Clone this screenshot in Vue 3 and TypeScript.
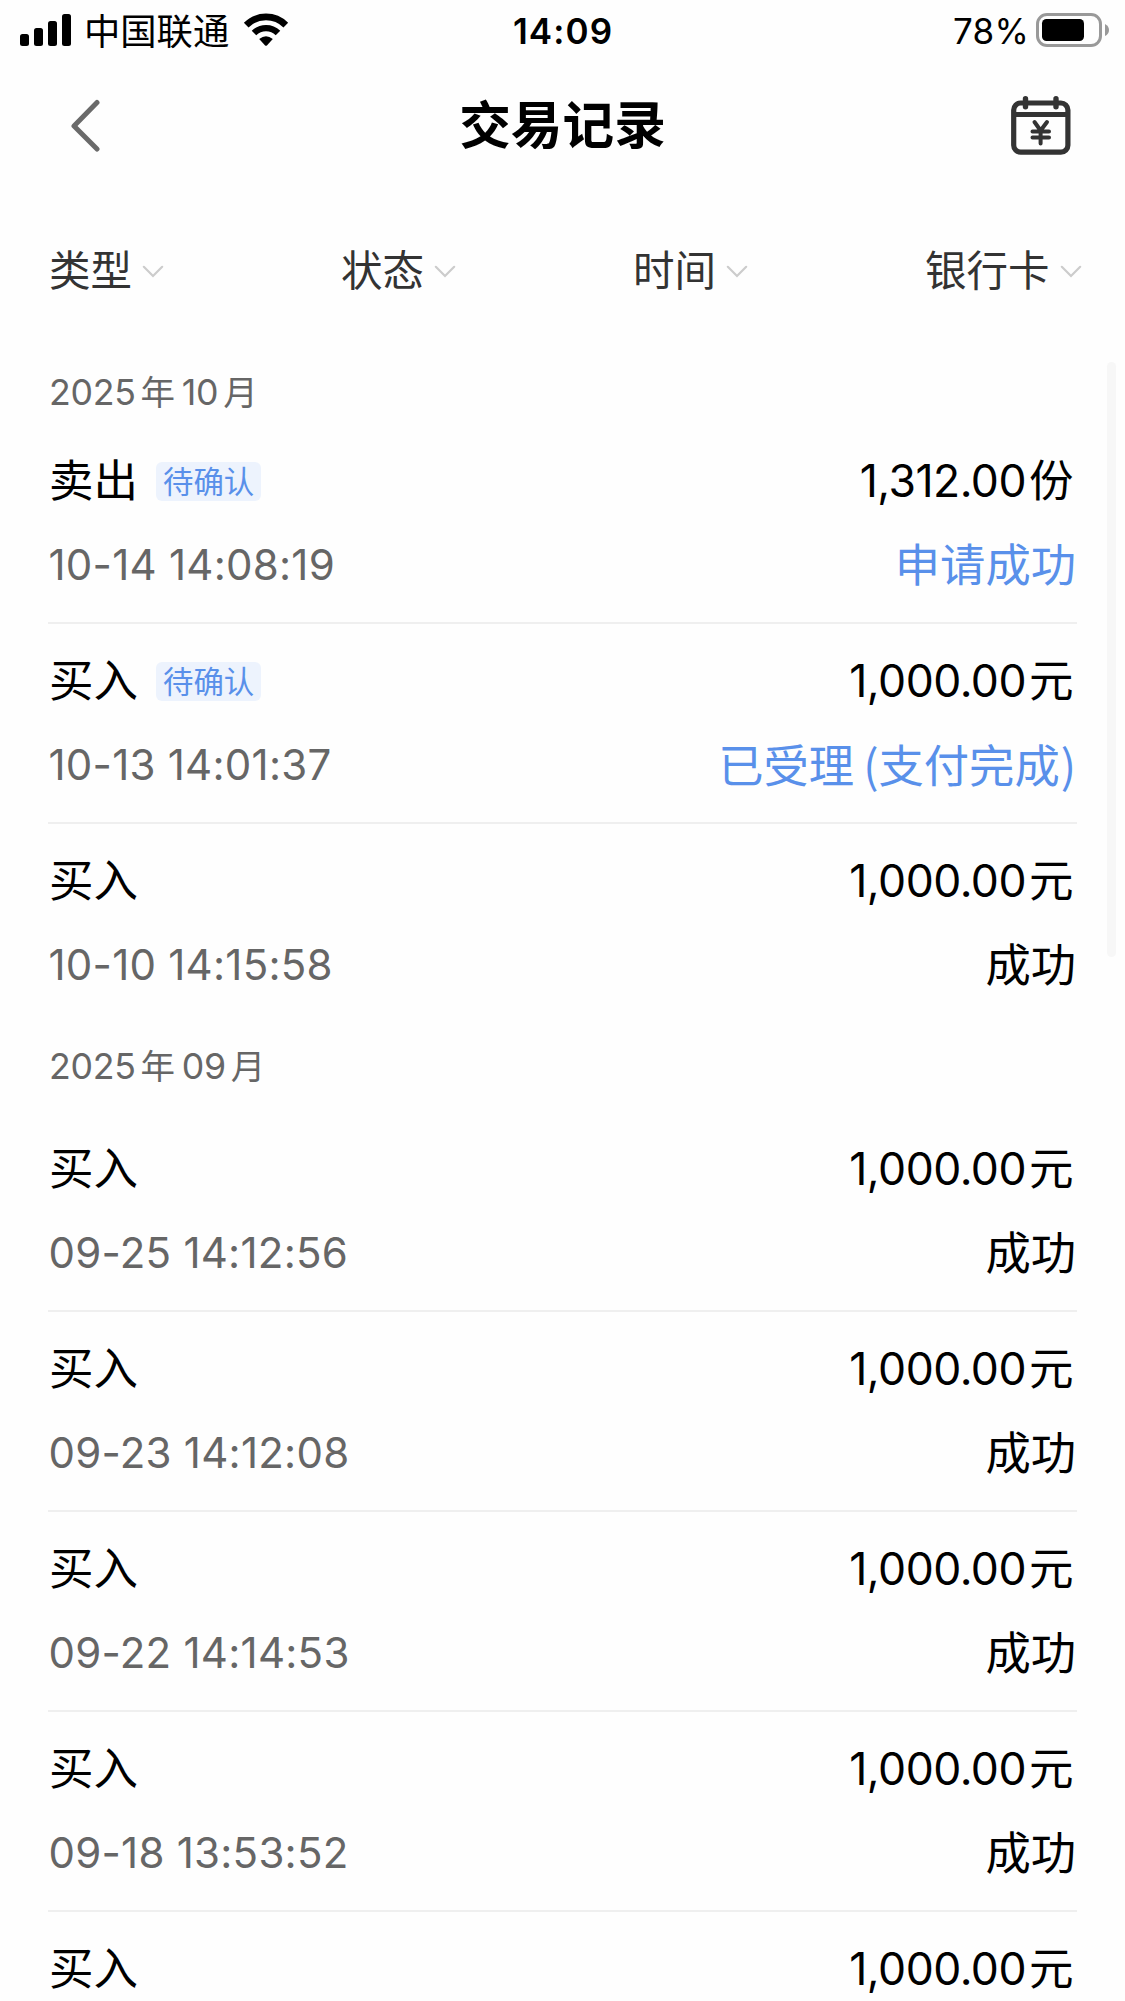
<script setup lang="ts">
interface TradeRecord {
  type: string
  tag?: string
  time: string
  amount: string
  unit: string
  status: string
  note?: string
  pending?: boolean
}

interface MonthGroup {
  year: string
  month: string
  records: TradeRecord[]
}

const filters: string[] = ['类型', '状态', '时间', '银行卡']

const buy = (time: string): TradeRecord => ({
  type: '买入',
  time,
  amount: '1,000.00',
  unit: '元',
  status: '成功',
})

const groups: MonthGroup[] = [
  {
    year: '2025',
    month: '10',
    records: [
      { type: '卖出', tag: '待确认', time: '10-14 14:08:19', amount: '1,312.00', unit: '份', status: '申请成功', pending: true },
      { ...buy('10-13 14:01:37'), tag: '待确认', status: '已受理', note: '支付完成', pending: true },
      buy('10-10 14:15:58'),
    ],
  },
  {
    year: '2025',
    month: '09',
    records: [
      buy('09-25 14:12:56'),
      buy('09-23 14:12:08'),
      buy('09-22 14:14:53'),
      buy('09-18 13:53:52'),
      { ...buy(''), status: '' },
    ],
  },
]
</script>

<template>
  <div class="screen">
    <div class="statusbar">
      <div class="side">
        <svg class="signal" width="52" height="34" viewBox="0 0 52 34">
          <rect x="0" y="21" width="9" height="12" rx="2.5" />
          <rect x="14" y="15" width="9" height="18" rx="2.5" />
          <rect x="28" y="8" width="9" height="25" rx="2.5" />
          <rect x="42" y="1" width="9" height="32" rx="2.5" />
        </svg>
        <span class="carrier">中国联通</span>
        <svg class="wifi" width="46" height="34" viewBox="0 0 46 34">
          <path d="M3.2 12.1 A28 28 0 0 1 42.8 12.1" fill="none" stroke="#000" stroke-width="6.6" />
          <path d="M11 20.1 A17 17 0 0 1 35 20.1" fill="none" stroke="#000" stroke-width="6.4" />
          <path d="M16.2 26 Q23 20.6 29.8 26 L23.9 32.4 Q23 33.2 22.1 32.4 Z" />
        </svg>
      </div>
      <span class="clock">14:09</span>
      <div class="side right">
        <span class="percent">78%</span>
        <svg class="battery" width="74" height="34" viewBox="0 0 74 34">
          <rect x="1.5" y="1.5" width="63" height="31" rx="9.5" fill="none" stroke="#999" stroke-width="3" />
          <rect x="6" y="6" width="42" height="22" rx="4.5" />
          <path d="M69 11 Q73 13 73 17 Q73 21 69 23 Z" fill="#999" />
        </svg>
      </div>
    </div>

    <div class="navbar">
      <svg class="back" width="30" height="54" viewBox="0 0 30 54">
        <path d="M27 3.5 L4 27 L27 50" fill="none" stroke="#6a6a6a" stroke-width="5" stroke-linecap="round" stroke-linejoin="round" />
      </svg>
      <h1 class="title">交易记录</h1>
      <svg class="calendar" width="60" height="60" viewBox="0 0 60 60" fill="none" stroke="#333">
        <rect x="2.7" y="7" width="54.2" height="49.2" rx="7" stroke-width="5.2" />
        <path d="M3 18.5 H57" stroke-width="5" />
        <path d="M14.5 2.7 V10.8 M45 2.7 V10.8" stroke-width="5.4" stroke-linecap="round" />
        <path d="M23.5 26 L29.6 34.5 L36 26 M29.6 35 V47.5 M21.5 35.5 H38 M21.5 41.5 H38" stroke-width="4" stroke-linecap="round" />
      </svg>
    </div>

    <div class="filters">
      <div v-for="name in filters" :key="name" class="filter">
        <span>{{ name }}</span>
        <svg width="22" height="14" viewBox="0 0 22 14">
          <path d="M1.8 1.8 L11 11 L20.2 1.8" fill="none" stroke="#ccc" stroke-width="2.2" stroke-linecap="round" />
        </svg>
      </div>
    </div>

    <div class="list">
      <section v-for="group in groups" :key="group.month" class="group">
        <div class="month"><span>{{ group.year }}</span><span class="han">年</span><span>{{ group.month }}</span><span class="han">月</span></div>
        <div v-for="record in group.records" :key="record.time" class="record">
          <div class="line">
            <div class="kind">
              <span class="type">{{ record.type }}</span>
              <span v-if="record.tag" class="tag">{{ record.tag }}</span>
            </div>
            <span class="amount">{{ record.amount }}<span class="unit">{{ record.unit }}</span></span>
          </div>
          <div class="line detail">
            <span class="time">{{ record.time }}</span>
            <span class="status" :class="{ pending: record.pending }">{{ record.status }}<template v-if="record.note"><span class="paren open">(</span>{{ record.note }}<span class="paren close">)</span></template></span>
          </div>
        </div>
      </section>
      <div class="scrollbar"></div>
    </div>
  </div>
</template>

<style>
body {
  background: #fefefe;
}
</style>

<style scoped>
.screen {
  width: 1125px;
  height: 2001px;
  overflow: hidden;
  background: #fefefe;
  color: #000;
  font-family: Inter, 'Noto Sans CJK SC', sans-serif;
  display: flex;
  flex-direction: column;
}

.statusbar {
  flex: none;
  height: 60px;
  display: flex;
  align-items: center;
  padding: 0 15px 0 20px;
}

.side {
  flex: 1;
  display: flex;
  align-items: center;
  height: 60px;
}

.right {
  justify-content: flex-end;
}

.signal {
  margin-right: 12px;
}

.carrier {
  font-size: 36.3px;
  line-height: 60px;
  width: 146px;
  margin-top: 4px;
  white-space: nowrap;
}

.wifi {
  margin-left: 13px;
}

.clock {
  font-size: 35px;
  font-weight: 600;
  line-height: 60px;
  letter-spacing: 1.1px;
  margin: 2px 4px 0 0;
}

.percent {
  font-size: 35px;
  line-height: 60px;
  letter-spacing: 0.2px;
  margin: 2px 7px 0 0;
}

.navbar {
  flex: none;
  height: 130px;
  display: flex;
  align-items: center;
  justify-content: space-between;
  padding: 2px 54px 0 70px;
}

.title {
  margin: 0 0 4px 14px;
  font-size: 51.7px;
  font-weight: 600;
  line-height: 70px;
}

.back {
  margin-bottom: 2px;
}

.calendar {
  display: block;
  margin-bottom: 2px;
}

.filters {
  flex: none;
  height: 158px;
  padding: 0 0 0 49px;
  display: grid;
  grid-template-columns: repeat(4, 292px);
}

.filter {
  display: flex;
  align-items: center;
  gap: 10px;
  height: 158px;
  color: #333;
  font-size: 41.5px;
  line-height: 60px;
  white-space: nowrap;
}

.filter svg {
  margin-top: 2px;
}

.list {
  position: relative;
  flex: 1;
  padding: 0 48px;
}

.month {
  height: 74px;
  line-height: 85px;
  padding-left: 1px;
  font-size: 35.7px;
  letter-spacing: -0.3px;
  color: #666;
}

.month .han {
  font-size: 34.5px;
  margin: 0 7px 0 5px;
}

.group + .group .month {
  height: 88px;
  line-height: 85px;
}

.record {
  box-sizing: border-box;
  height: 200px;
  padding-top: 15px;
  border-bottom: 2px solid #efefef;
}

.record:last-child {
  border-bottom-color: transparent;
}

.line {
  display: flex;
  justify-content: space-between;
  align-items: center;
  height: 85px;
  white-space: nowrap;
}

.detail {
  height: 81px;
}

.kind {
  display: flex;
  align-items: center;
}

.type {
  font-size: 44.5px;
  line-height: 85px;
  padding-left: 1px;
}

.tag {
  box-sizing: border-box;
  height: 39px;
  margin-left: 18px;
  padding: 0 7px;
  border-radius: 6px;
  background: #edf3fd;
  color: #5990ea;
  font-size: 30.4px;
  line-height: 40px;
}

.amount {
  font-size: 44.5px;
  line-height: 85px;
  letter-spacing: -0.5px;
  padding-right: 4px;
}

.unit {
  margin-left: 3px;
}

.time {
  color: #666;
  font-size: 42px;
  line-height: 81px;
  letter-spacing: 0.25px;
  padding-left: 0.5px;
}

.status {
  font-size: 45.3px;
  line-height: 81px;
  margin-top: 1px;
  padding-right: 1px;
}

.pending {
  color: #5990ea;
}

.paren {
  font-family: 'Noto Sans CJK SC', sans-serif;
}

.open {
  margin-left: 9px;
}

.close {
  margin-left: 1px;
}

.scrollbar {
  position: absolute;
  top: 12px;
  right: 9px;
  width: 9px;
  height: 595px;
  border-radius: 5px;
  background: #f7f7f7;
}
</style>
